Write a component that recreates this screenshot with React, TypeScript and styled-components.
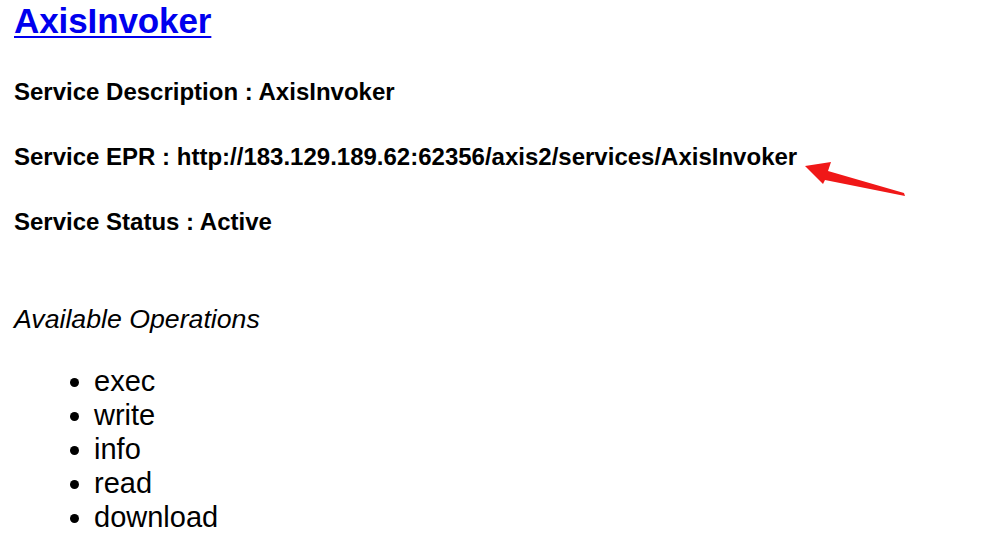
import React from "react";
import styled, { createGlobalStyle } from "styled-components";

const Global = createGlobalStyle`
  html, body { margin: 0; padding: 0; background: #ffffff; }
  body { font-family: "Liberation Sans", Arial, Helvetica, sans-serif; color: #000; }
`;

const Page = styled.div`
  position: relative;
  width: 986px;
  height: 542px;
  overflow: hidden;
  padding: 1px 0 0 14px;
  box-sizing: border-box;
`;

const Title = styled.h2`
  margin: 0;
  font-size: 35px;
  line-height: 40px;
  font-weight: 700;
  letter-spacing: -0.1px;
  a {
    color: #0000ee;
    text-decoration: underline;
    text-decoration-thickness: 2px;
    text-underline-offset: 3px;
  }
`;

const Info = styled.div<{ $top: number }>`
  margin-top: ${(p) => p.$top}px;
  font-size: 24px;
  line-height: 28px;
  font-weight: 700;
`;

const OpsTitle = styled.div`
  margin-top: 67px;
  font-size: 26.7px;
  line-height: 32px;
  font-style: italic;
`;

const OpsList = styled.ul`
  margin: 29px 0 0 0;
  padding: 0 0 0 80px;
  font-size: 29px;
  line-height: 34px;
  li { padding-left: 0; }
`;

const Arrow = styled.svg`
  position: absolute;
  left: 800px;
  top: 155px;
  width: 110px;
  height: 45px;
`;

export default function App() {
  return (
    <>
      <Global />
      <Page>
        <Title>
          <a href="#">AxisInvoker</a>
        </Title>
        <Info $top={37}>Service Description : AxisInvoker</Info>
        <Info $top={37}>Service EPR : http://183.129.189.62:62356/axis2/services/AxisInvoker</Info>
        <Info $top={37}>Service Status : Active</Info>
        <OpsTitle>Available Operations</OpsTitle>
        <OpsList>
          <li>exec</li>
          <li>write</li>
          <li>info</li>
          <li>read</li>
          <li>download</li>
        </OpsList>
        <Arrow viewBox="800 155 110 45">
          <polygon points="805,166 831,162 828,171 904,193 905,196 825,180 823,184" fill="#f01818" />
        </Arrow>
      </Page>
    </>
  );
}
